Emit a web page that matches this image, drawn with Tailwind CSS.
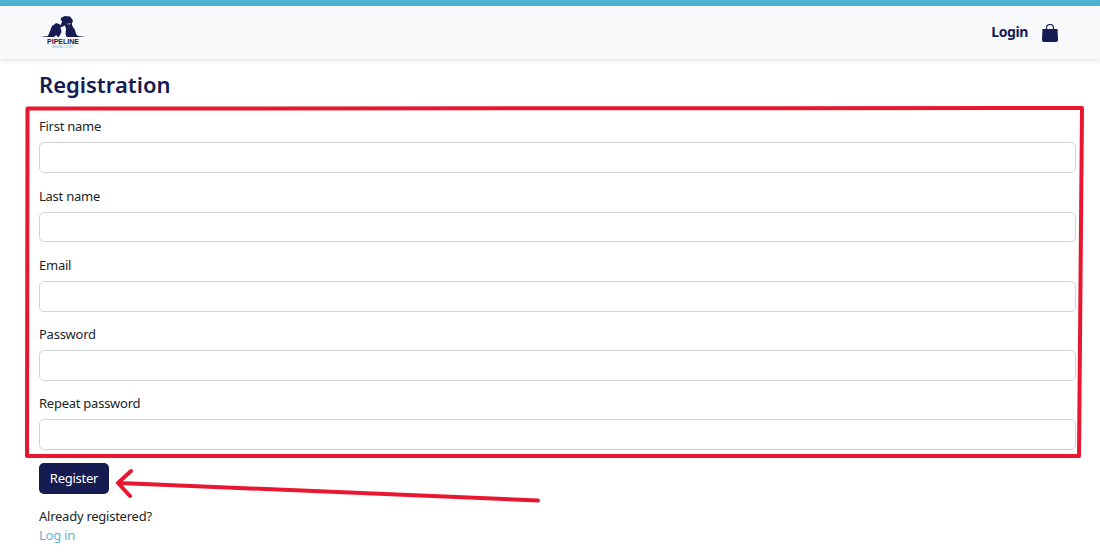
<!DOCTYPE html>
<html lang="en">
<head>
<meta charset="utf-8">
<script src="https://cdn.jsdelivr.net/npm/@tailwindcss/browser@4"></script>
<title>Registration</title>
</head>
<body class="relative h-[557px] overflow-hidden bg-white font-['Noto_Sans',sans-serif] text-[13px] tracking-[-0.25px] text-[#212529]">
<div class="h-[6px] bg-[#4bb3d0]"></div>
<header class="flex h-[53px] items-center justify-between bg-[#f8f9fa] pl-[40px] pr-[42px] shadow-[0_2px_4px_rgba(0,0,0,0.1)]">
  <div class="mt-[-1px] flex w-[46px] flex-col items-center">
    <svg viewBox="0 0 46 22" class="h-[22px] w-[46px]" fill="#161b52" aria-hidden="true">
      <path d="M0 21 L8 20 L10 15 L12 10 L15 8 L16 7 L19 8 L21 9 L22 5 L20.5 3.5 L21.5 1.5 L25 0 L30 0.5 L32 3 L33 5 L32 7 L29.5 7.5 L28.5 10 L28 13 L26 14 L27 8 L27 7 L28 9 L29 12 L28 15 L27 18 L25 21 L18 21 L16 19 L14 21 Z"/>
      <path d="M26 21 L25 18 L26 15 L25 13 L26 9 L28 10 L30 8 L31 7 L32 6.5 L32 9 L33 11 L35 14 L36 18 L38 20 L46 21 Z"/>
      <path d="M20.5 11.5 L25 9.5 L26 13 L25.5 18 L26.5 21 L19 21 L21.5 16 Z" fill="#f8f9fa"/>
      <path d="M27 7.5 L31 7 L31 8 L27 8.5 Z" fill="#d9682f"/>
    </svg>
    <span class="font-['Liberation_Sans',sans-serif] text-[7px] leading-[7px] font-bold tracking-[0px] text-[#161b52]">PIPELINE</span>
    <span class="font-['Liberation_Sans',sans-serif] text-[3px] leading-[4px] tracking-[0px] text-[#6db9d8]">ANIMAL CLINIC</span>
  </div>
  <nav class="flex items-center gap-[14px]">
    <a class="mt-[-2px] text-[14px] font-bold tracking-[-0.4px] text-[#161b52]">Login</a>
    <svg viewBox="0 0 16 18" class="h-[18px] w-[16px]" aria-hidden="true">
      <path d="M0.5 5 H15.5 L16 16 A2 2 0 0 1 14 18 H2 A2 2 0 0 1 0 16 Z" fill="#161b52"/>
      <path d="M4.5 6 V4 A3.5 3.5 0 0 1 11.5 4 V6" fill="none" stroke="#161b52" stroke-width="1.2"/>
    </svg>
  </nav>
</header>
<main class="px-[39px]">
  <h1 class="mt-[10px] text-[22px] leading-[30px] font-semibold tracking-[0px] text-[#161b52]">Registration</h1>
  <form class="mt-[17px] w-[1037px]">
    <div class="flex flex-col gap-[12px]">
      <label class="mb-[1px] block"><span class="block h-[26px] leading-[20px]">First name</span><input type="text" class="block h-[31px] w-full rounded-[5px] border border-[#ced4da] bg-white"></label>
      <label class="mb-[1px] block"><span class="block h-[26px] leading-[20px]">Last name</span><input type="text" class="block h-[30px] w-full rounded-[5px] border border-[#ced4da] bg-white"></label>
      <label class="block"><span class="block h-[26px] leading-[20px]">Email</span><input type="text" class="block h-[31px] w-full rounded-[5px] border border-[#ced4da] bg-white"></label>
      <label class="block"><span class="block h-[26px] leading-[20px]">Password</span><input type="password" class="block h-[31px] w-full rounded-[5px] border border-[#ced4da] bg-white"></label>
      <label class="block"><span class="block h-[26px] leading-[20px]">Repeat password</span><input type="password" class="block h-[31px] w-full rounded-[5px] border border-[#ced4da] bg-white"></label>
    </div>
    <button type="button" class="mt-[13px] block h-[31px] w-[70px] rounded-[5px] bg-[#161b52] text-[13px] text-white">Register</button>
  </form>
  <p class="mt-[13px] leading-[19px]">Already registered?</p>
  <a class="block leading-[19px] text-[#5fb4d8]">Log in</a>
</main>
<svg class="pointer-events-none absolute top-0 left-0 h-[557px] w-[1100px]" viewBox="0 0 1100 557" fill="none" stroke="#e8172f" stroke-linecap="round" stroke-linejoin="round" aria-hidden="true">
  <path d="M27.5 108.5 L1082 108 L1079 456 L27 456 Z" stroke-width="4"/>
  <path d="M538 500.5 L120 483 M131 471 L118 483 L130 496" stroke-width="4"/>
</svg>
</body>
</html>
